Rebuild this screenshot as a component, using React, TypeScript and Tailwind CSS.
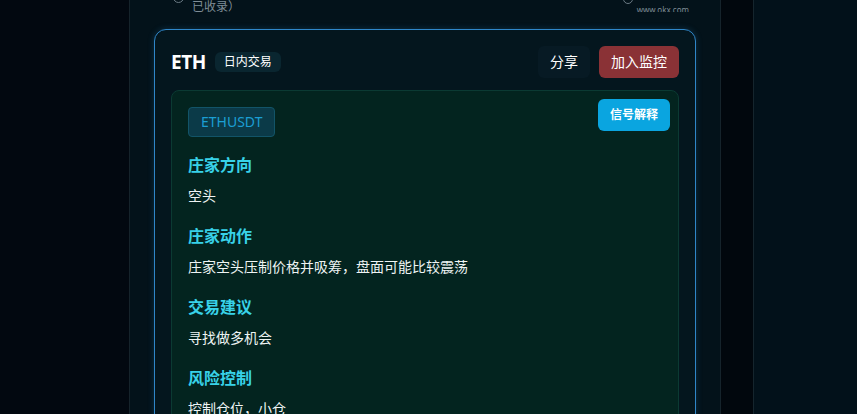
import React from "react"

const sections = [
  { title: "庄家方向", text: "空头" },
  { title: "庄家动作", text: "庄家空头压制价格并吸筹，盘面可能比较震荡" },
  { title: "交易建议", text: "寻找做多机会" },
  { title: "风险控制", text: "控制仓位，小仓" },
]

export default function App() {
  return (
    <div
      className="flex h-[414px] overflow-hidden bg-[#020810] text-white"
      style={{ fontFamily: '"Noto Sans", "Noto Sans CJK SC", sans-serif' }}
    >
      <div className="w-[129px] shrink-0" />

      <div className="w-[592px] shrink-0 border-x border-[#15232b] bg-[#03121a] px-6">
        {/* tail of the previous row */}
        <div className="flex h-[12px] items-end justify-between overflow-hidden">
          <div className="ml-[19px] flex items-end gap-[8px]">
            <span className="mb-[9px] h-[11px] w-[11px] rounded-full border border-[#6b7a84]" />
            <div className="text-[12px] leading-[16px] text-[#7f8d96]">
              <div>（共 12 条信号，</div>
              <div className="-mb-[3px]">已收录）</div>
            </div>
          </div>
          <div className="mr-[7px] flex items-end gap-[4px]">
            <span className="mb-[8px] h-[10px] w-[10px] rounded-full border border-[#6b7a84]" />
            <div className="-mb-[4px] text-[8px] leading-[12px] text-[#7f8d96] underline">
              www.okx.com
            </div>
          </div>
        </div>

        <div className="mt-[17px] rounded-xl border border-[#2f86c8] bg-[#04161e] p-4 shadow-[0_0_6px_rgba(47,134,200,0.25)]">
          <div className="flex h-8 items-center justify-between">
            <div className="flex items-center gap-[9px]">
              <span className="text-[19px] font-bold leading-none tracking-tight">ETH</span>
              <span className="rounded-md bg-[#0a2630] px-[9px] py-[2px] text-[12px] leading-4">日内交易</span>
            </div>
            <div className="flex items-center gap-[9px]">
              <button className="h-8 rounded-md bg-[#071a24] px-3 text-[14px] leading-5 text-white">分享</button>
              <button className="h-8 rounded-md bg-[#8a3236] px-3 text-[14px] leading-5 text-white">加入监控</button>
            </div>
          </div>

          <div className="relative mt-3 h-[400px] rounded-lg border border-[#0b3a33] bg-[#03241f] p-4">
            <button className="absolute right-2 top-2 h-8 rounded-md bg-[#0aa5e0] px-3 text-[12px] font-semibold leading-4 text-white">
              信号解释
            </button>
            <span className="inline-block rounded border border-[#125468] bg-[#0b3a48] px-3 py-1 text-[14px] leading-5 text-[#1b9ed3]">
              ETHUSDT
            </span>
            <div className="mt-4 flex flex-col gap-[18px]">
              {sections.map((s) => (
                <div key={s.title}>
                  <h3 className="text-[16px] font-bold leading-6 text-[#38d2e8]">{s.title}</h3>
                  <p className="mt-[9px] text-[14px] leading-5 text-[#eef4f4]">{s.text}</p>
                </div>
              ))}
            </div>
          </div>
        </div>
      </div>

      <div className="w-[33px] shrink-0 border-r border-[#15252d] bg-[#01070d]" />
      <div className="flex-1 bg-[#02111a]" />
    </div>
  )
}
